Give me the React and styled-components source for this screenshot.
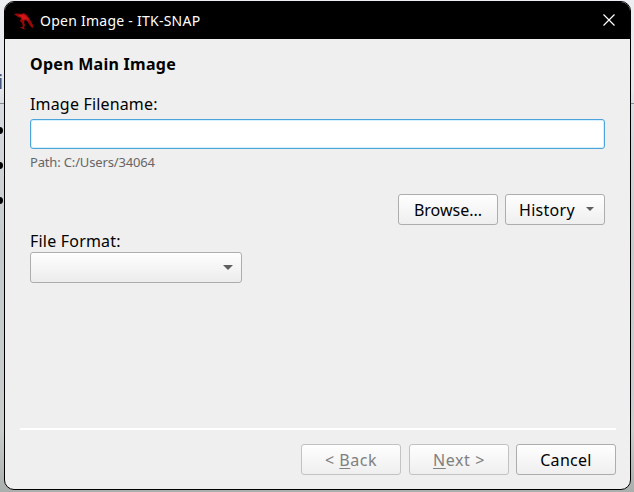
import React from "react";
import styled, { createGlobalStyle } from "styled-components";

const Global = createGlobalStyle`
  * { box-sizing: border-box; }
  body { margin: 0; overflow: hidden; font-family: "Noto Sans", "Open Sans", sans-serif; }
`;

const Desktop = styled.div`
  position: relative;
  width: 634px;
  height: 492px;
  padding: 1px 3px 2px 4px;
  overflow: hidden;
  background:
    linear-gradient(#8d8d91, #8d8d91) 0 103px / 100% 1px no-repeat,
    linear-gradient(#eceef2 0, #e4e6ea 90px, #d9dce0 105px, #c5cacc 250px, #c9cdcc 430px, #a9afad 492px);
`;

const Peek = styled.span`
  position: absolute;
  left: -2px;
  top: 70px;
  font-size: 20px;
  line-height: 24px;
  color: #3d557f;
`;

const Bullet = styled.span`
  position: absolute;
  left: -4px;
  top: ${(p) => p.$top}px;
  width: 7px;
  height: 7px;
  border-radius: 50%;
  background: #000;
`;

const Window = styled.main`
  position: relative;
  display: flex;
  flex-direction: column;
  height: 489px;
  border: 1px solid #000;
  border-radius: 10px;
  background: #efefef;
  overflow: hidden;
`;

const TitleBar = styled.header`
  display: flex;
  align-items: center;
  flex: 0 0 37px;
  padding: 0 14px 0 8px;
  background: #000;
`;

const Logo = styled.svg`
  width: 22px;
  height: 20px;
  margin-right: 5px;
`;

const Close = styled.svg`
  width: 14px;
  height: 14px;
  margin: -1px 0 0 auto;
`;

const Text = styled.span`
  display: block;
  white-space: pre;
  font-size: ${(p) => p.$size || 16}px;
  line-height: ${(p) => p.$line || 22}px;
  font-weight: ${(p) => (p.$bold ? 700 : 400)};
  letter-spacing: ${(p) => p.$track || 0}px;
  color: ${(p) => p.$color || "inherit"};
`;

const Body = styled.section`
  display: flex;
  flex-direction: column;
  flex: 1;
  padding: 14px 25px 0;
`;

const Field = styled.div`
  display: flex;
  flex-direction: column;
  margin-top: ${(p) => p.$gap}px;
`;

const Input = styled.input`
  height: 30px;
  margin: 4px 0 3px;
  border: 1px solid #4ba3d9;
  border-radius: 3px;
  background: #fff;
  box-shadow: inset 0 0 0 1px #d5f1fd;
  outline: none;
`;

const Actions = styled.div`
  display: flex;
  justify-content: flex-end;
  gap: 7px;
  margin-top: 22px;
`;

const Button = styled.button`
  display: flex;
  align-items: center;
  justify-content: ${(p) => (p.$menu ? "space-between" : "center")};
  width: 100px;
  height: 31px;
  padding: ${(p) => (p.$menu ? "0 10px 0 13px" : "0")};
  border: 1px solid ${(p) => (p.disabled ? "#c2c2c2" : "#adadad")};
  border-radius: 3px;
  background: linear-gradient(#fefefe, #efefef);
  color: ${(p) => (p.disabled ? "#808080" : "#000")};
  font-family: inherit;
  u { text-underline-offset: 2px; text-decoration-thickness: 1px; }
`;

const Combo = styled.div`
  display: flex;
  align-items: center;
  justify-content: flex-end;
  width: 212px;
  height: 31px;
  padding-right: 8px;
  border: 1px solid #adadad;
  border-radius: 3px;
  background: linear-gradient(#fefefe, #ececec);
`;

const Arrow = styled.svg`
  width: ${(p) => p.$w}px;
  height: ${(p) => p.$w / 2}px;
  margin-bottom: ${(p) => p.$lift || 0}px;
`;

const Footer = styled.footer`
  display: flex;
  justify-content: flex-end;
  gap: 7px;
  height: 61px;
  margin: 0 14px 0 15px;
  padding-top: 14px;
  border-top: 2px solid #fff;
`;

const NavButtons = styled.div`
  display: flex;
  gap: 8px;
`;

const Down = ({ w, lift }) => (
  <Arrow $w={w} $lift={lift} viewBox="0 0 10 5">
    <path d="M0 0H10L5 5Z" fill="#5e5e5e" />
  </Arrow>
);

export default function App() {
  return (
    <Desktop>
      <Global />
      <Peek>i</Peek>
      <Bullet $top={127} />
      <Bullet $top={162} />
      <Bullet $top={197} />
      <Window>
        <TitleBar>
          <Logo viewBox="0 0 22 20">
            <path d="M1 3L4 2.5L9 3L10 2L13 3L16 7L20 14V17L18 16L14 10L12 9L11 11L12 14L11 17L13 18.5L10 18L7 16.5L10 15.5L9 12L7 10L8 7L5 6Z" fill="#970909" />
            <path d="M5 4L11 3.5L14 6L17 10L13 8L10 9L8 6Z" fill="#d31515" />
          </Logo>
          <Text $size={14} $track={0.25} $color="#fff">Open Image - ITK-SNAP</Text>
          <Close viewBox="0 0 14 14">
            <path d="M1.5 1.5L12.5 12.5M12.5 1.5L1.5 12.5" stroke="#fff" strokeWidth="1.2" />
          </Close>
        </TitleBar>
        <Body>
          <Text $bold $track={0.27}>Open Main Image</Text>
          <Field $gap={18}>
            <Text $track={0.17}>Image Filename:</Text>
            <Input aria-label="Image Filename" />
            <Text $size={13} $line={20} $track={-0.16} $color="#666">Path: C:/Users/34064</Text>
          </Field>
          <Actions>
            <Button><Text>Browse...</Text></Button>
            <Button $menu><Text $track={0.3}>History</Text><Down w={8} lift={2} /></Button>
          </Actions>
          <Field $gap={5}>
            <Text $track={0.2}>File Format:</Text>
            <Combo><Down w={10} /></Combo>
          </Field>
        </Body>
        <Footer>
          <NavButtons>
            <Button disabled><Text $track={0.5}>{"< "}<u>B</u>ack</Text></Button>
            <Button disabled><Text $track={0.6}><u>N</u>ext &gt;</Text></Button>
          </NavButtons>
          <Button><Text $track={0.3}>Cancel</Text></Button>
        </Footer>
      </Window>
    </Desktop>
  );
}
